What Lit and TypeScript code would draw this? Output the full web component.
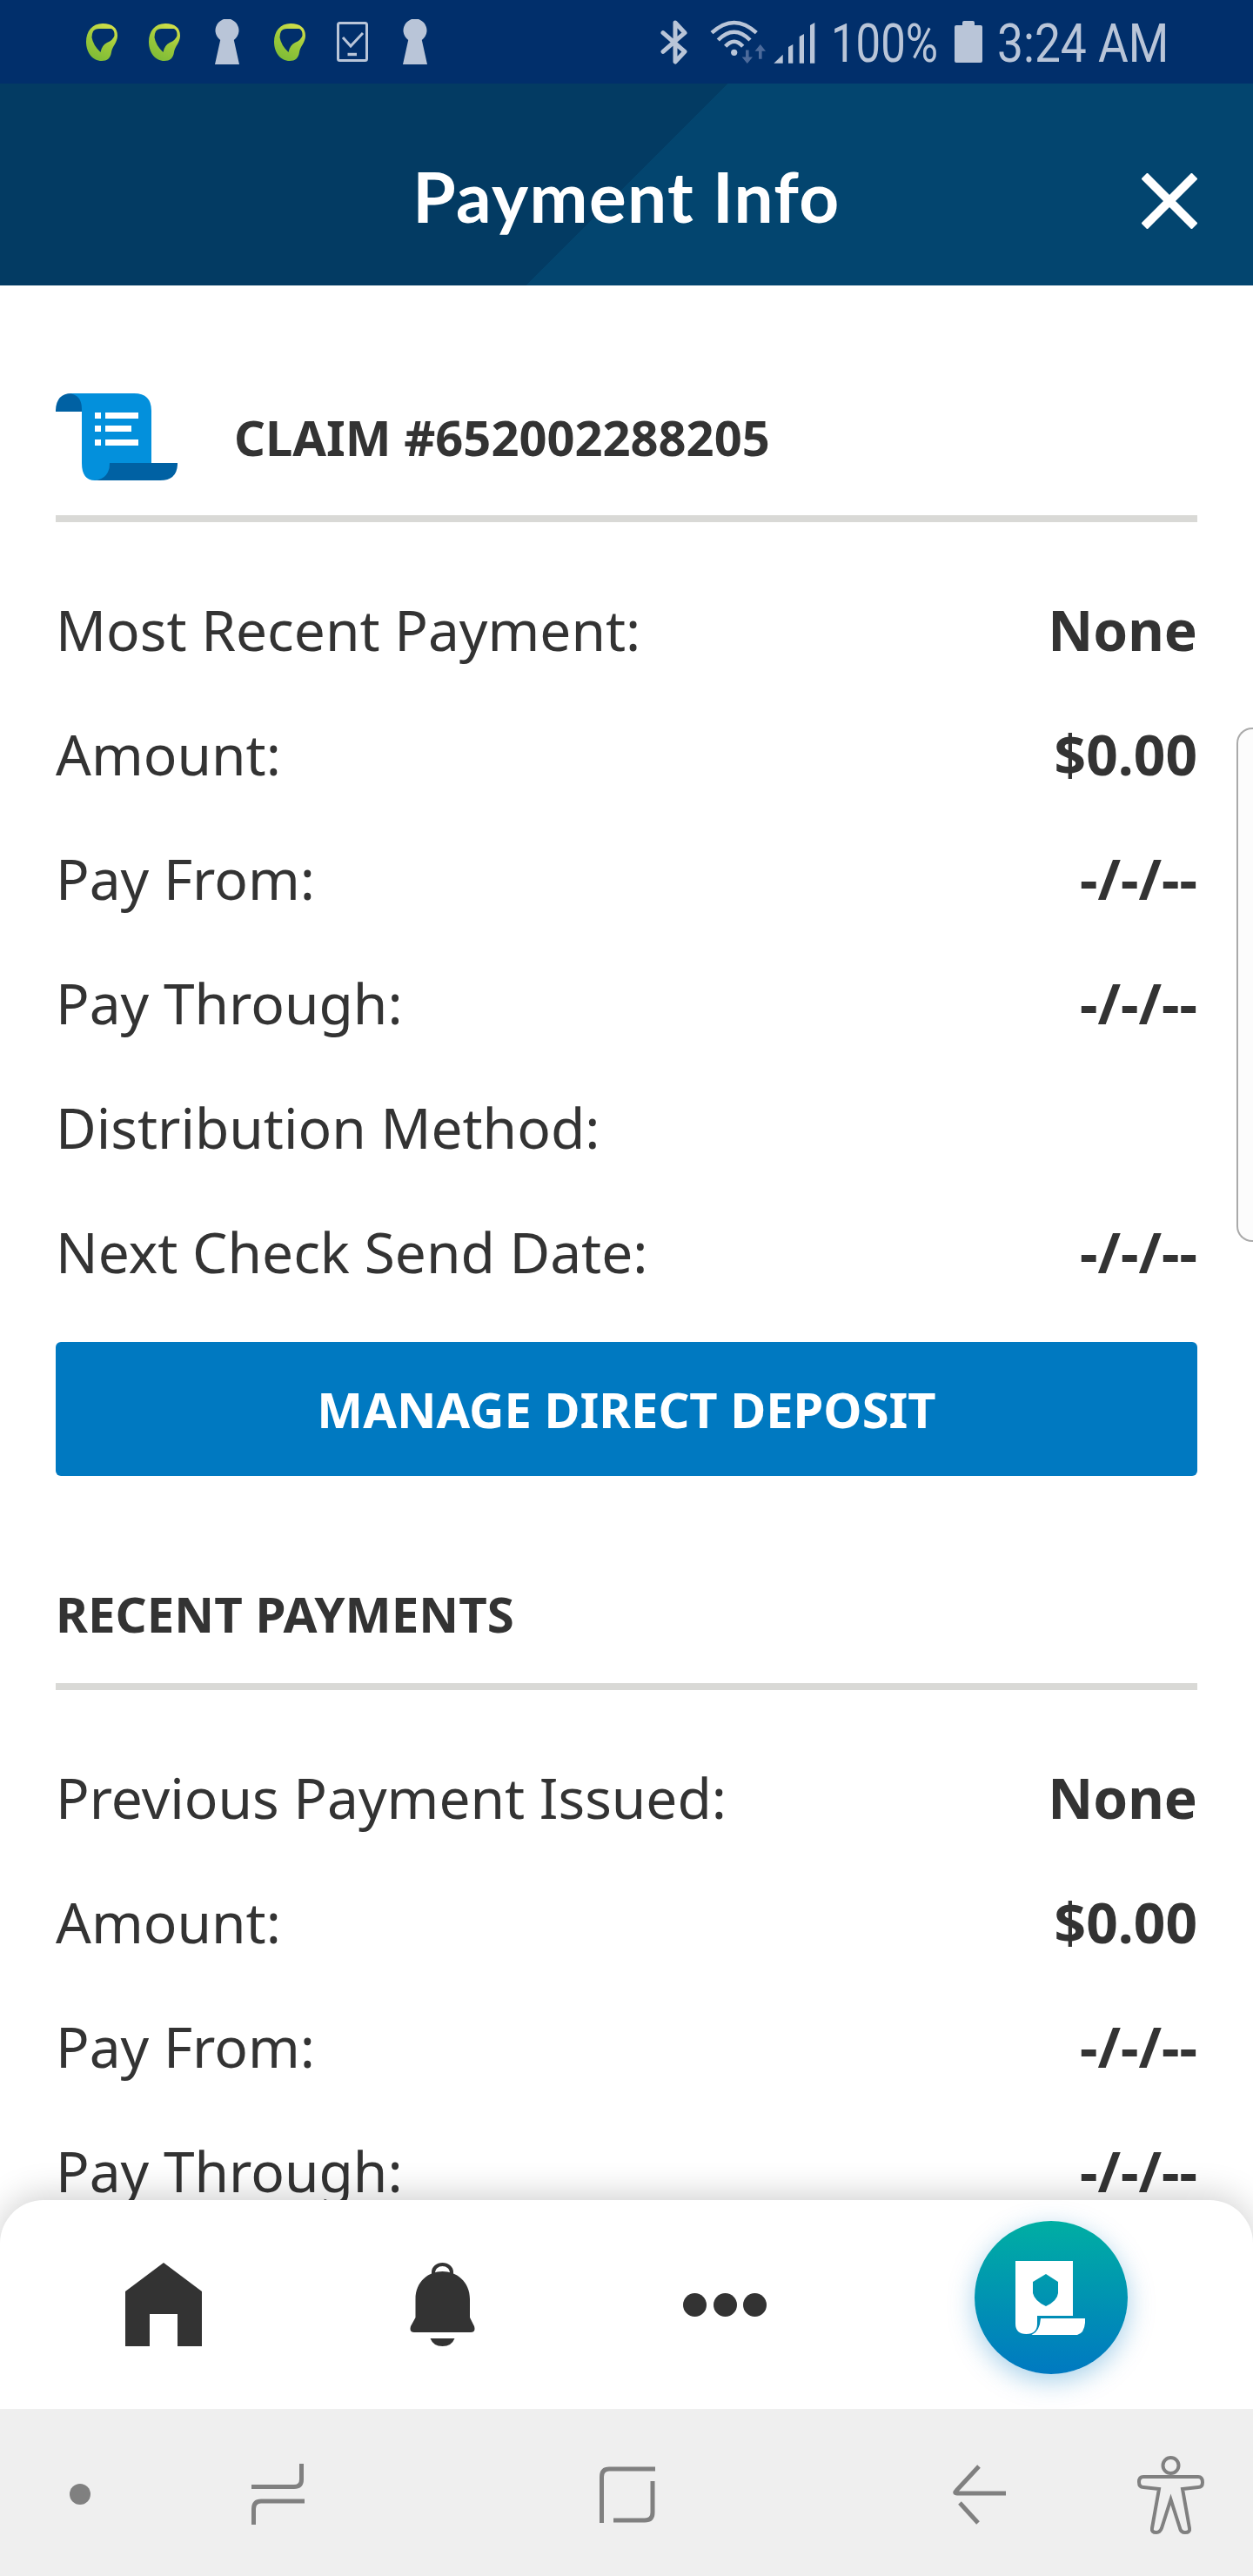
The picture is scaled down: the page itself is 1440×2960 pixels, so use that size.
import { LitElement, html, css } from "lit";
import { customElement } from "lit/decorators.js";

const leaf = html`<svg class="ic" width="36" height="43" viewBox="0 0 36 43">
  <defs><linearGradient id="lf" x1="0.7" y1="0" x2="0.3" y2="1"><stop offset="0" stop-color="#d3e04a" /><stop offset="0.5" stop-color="#9cc93a" /><stop offset="1" stop-color="#7dbb36" /></linearGradient></defs>
  <path fill="url(#lf)" fill-rule="evenodd" d="M19 0C30 0 36 5 36 14C36 22 30 26 29 33C28 40 24 43 18 43C7 43 0 33 0 21C0 9 7 0 19 0ZM8 9Q10 6 15 6L29 6Q33 8 32.5 14Q31 19 24 22Q18 25 16.5 33Q8 25 6.5 16Q6.5 12 8 9Z" />
</svg>`;

const keyhole = html`<svg class="ic" width="36" height="52" viewBox="0 0 36 52"><path fill="#b9c5d8" d="M10.2 24A13.5 13.5 0 1 1 25.8 24L32 52H4Z" /></svg>`;

const phone = html`<svg class="ic" width="36" height="46" viewBox="0 0 36 46" fill="none" stroke="#b9c5d8">
  <rect x="1.5" y="1.5" width="33" height="43" rx="2" stroke-width="3" />
  <path d="M7 18L16 28L30 13" stroke-width="3" /><path d="M12.5 37.5H23" stroke-width="3.4" />
</svg>`;

const bluetooth = html`<svg width="31" height="54" viewBox="0 0 31 54" fill="none" stroke="#b9c5d8" stroke-width="5" stroke-linejoin="round" stroke-linecap="round">
  <path d="M3 16.7L28 38.3L17 50V5L28 16.7L3 38.3" />
</svg>`;

const wifi = html`<svg width="68" height="54" viewBox="0 0 68 54" fill="none">
  <g stroke="#b9c5d8" stroke-width="4.5"><path d="M4 16.7Q29.7 -6.7 55.3 16.7" /><path d="M11.3 25Q29.7 6.4 48 25" /><path d="M19.7 32.3Q29.7 21 39.7 32.3" /></g>
  <circle cx="29.7" cy="39.3" r="3.6" fill="#b9c5d8" />
  <path fill="#4c6a9a" d="M43 36.5h3.6v8h4.4L44.8 52L38.6 44.5h4.4ZM58 46.7v-9h-4.4L59.8 30L66 37.7h-4.4v9Z" />
</svg>`;

const signal = html`<svg width="50" height="54" viewBox="0 0 50 54"><path fill="#b9c5d8" d="M1.3 51.7L11.7 41.7V51.7ZM18 51.7V33L23.3 30V51.7ZM30.7 51.7V21L36 18V51.7ZM43 51.7V8L48.3 5V51.7Z" /></svg>`;

const battery = html`<svg width="32" height="48" viewBox="0 0 32 48"><path fill="#b9c5d8" d="M9 2Q9 0 11 0H21Q23 0 23 2V5H30Q32 5 32 7V46Q32 48 30 48H2Q0 48 0 46V7Q0 5 2 5H9Z" /></svg>`;

const close = html`<svg width="64" height="64" viewBox="0 0 64 64" fill="none" stroke="#fff" stroke-width="10"><path d="M3 3L61 61M61 3L3 61" /></svg>`;

const scroll = html`<svg width="140" height="100" viewBox="0 0 140 100">
  <path fill="#0061a3" d="M0 21V19Q1 0 18 0Q31 1 31 21Z" />
  <path fill="#0390dc" d="M16 0H90Q110 0 110 20V84H62Q62 100 45 100Q30 100 30 80V18Q30 2 16 0Z" />
  <path fill="#0061a3" d="M62 80H140V82Q139 100 120 100H45Q62 98 62 80Z" />
  <path fill="#fff" d="M45 22h7v7h-7ZM57 22h38v7H57ZM45 37h7v7h-7ZM57 37h30v7H57ZM45 53h7v7h-7ZM57 53h38v7H57Z" />
</svg>`;

const home = html`<svg width="88" height="96" viewBox="0 0 88 96"><path fill="#333" d="M44 0L88 33V96H60V59H28V96H0V33Z" /></svg>`;

const bell = html`<svg width="75" height="96" viewBox="0 0 75 96">
  <path fill="#333" d="M37.5 10C53 10 69 21 69 42V63L74 73Q76 80 70 80H5Q-1 80 1 73L6.5 63V42C6.5 21 22 10 37.5 10Z" />
  <path fill="none" stroke="#333" stroke-width="4" d="M27 15V11A10.5 9 0 0 1 48 11V15" />
  <path fill="#333" d="M23.5 87H51.5Q48 96 37.5 96Q27 96 23.5 87Z" />
</svg>`;

const policy = html`<svg width="80" height="85" viewBox="0 0 80 85">
  <path fill="#fff" fill-rule="evenodd" d="M0 0H66V63H25V72Q25 84 12.5 84Q0 84 0 72ZM35 15L20 24V37Q22 46 35 52Q48 46 49 37V24Z" />
  <path fill="#fff" d="M29 66H80V71Q79 83 71 85H18.5Q28 81 29 66Z" />
</svg>`;

const recents = html`<svg width="61" height="70" viewBox="0 0 61 70" fill="none" stroke="#808080" stroke-width="5"><path d="M0 26.5H49Q57.5 26.5 57.5 18V0" /><path d="M61 43H11Q2.5 43 2.5 52V70" /></svg>`;

const square = html`<svg width="64" height="65" viewBox="0 0 64 65" fill="none" stroke="#808080" stroke-width="5"><path d="M2.5 65V12Q2.5 3 11 3H64" /><path d="M16 62H52Q61 62 61 53V17" /></svg>`;

const back = html`<svg width="62" height="70" viewBox="0 0 62 70" fill="none" stroke="#808080" stroke-width="5"><path d="M31 3L5 31Q2 34 6 34H62" /><path d="M9 45L30 68" /></svg>`;

const access = html`<svg width="78" height="92" viewBox="0 0 78 92" fill="none" stroke="#808080" stroke-width="4">
  <circle cx="38.5" cy="13" r="9" />
  <path d="M7 26H70Q75 26 75 32.5Q75 38 70 38L52 40L60 85Q61 90 55 90Q50 90 49 85L38.5 52L28 85Q26 90 22 90Q16 90 17 85L25 40L7 38Q2 38 2 32Q2 26 7 26Z" />
</svg>`;

const claimRows = [
  ["Most Recent Payment:", "None"],
  ["Amount:", "$0.00"],
  ["Pay From:", "-/-/--"],
  ["Pay Through:", "-/-/--"],
  ["Distribution Method:", ""],
  ["Next Check Send Date:", "-/-/--"],
];

const recentRows = [
  ["Previous Payment Issued:", "None"],
  ["Amount:", "$0.00"],
  ["Pay From:", "-/-/--"],
  ["Pay Through:", "-/-/--"],
];

@customElement("app-root")
export class AppRoot extends LitElement {
  static styles = css`
    :host {
      display: flex;
      flex-direction: column;
      position: relative;
      height: 2960px;
      overflow: hidden;
      background: #fff;
      font-family: "Noto Sans", sans-serif;
      color: #333;
    }
    .status {
      height: 96px;
      flex: none;
      background: #012f6b;
      display: flex;
      align-items: center;
      justify-content: space-between;
      padding: 0 99px;
      color: #b9c5d8;
      font-family: Roboto, sans-serif;
      font-weight: 400;
    }
    .status-left { display: flex; gap: 36px; align-items: center; }
    .status-right { display: flex; align-items: center; gap: 17px; }
    .radio { display: flex; align-items: center; gap: 6px; }
    .bt { margin-right: 18px; display: flex; }
    .stext {
      display: block;
      margin-top: 4px;
      font-size: 62px;
      line-height: 62px;
      white-space: nowrap;
      transform-origin: left center;
    }
    .pct { width: 125px; transform: scaleX(0.82); }
    .time { width: 195px; transform: scaleX(0.86); }

    .header {
      height: 232px;
      flex: none;
      box-sizing: border-box;
      padding: 26px 64px 0;
      background: linear-gradient(135deg, #033b63 50%, #03456f 50%);
      display: grid;
      grid-template-columns: 1fr auto 1fr;
      align-items: center;
    }
    .title {
      grid-column: 2;
      font-family: Lato, sans-serif;
      font-weight: 700;
      font-size: 80px;
      line-height: 90px;
      letter-spacing: 1.4px;
      color: #fff;
    }
    .close { justify-self: end; display: flex; margin-top: 12px; }

    .content {
      flex: 1;
      min-height: 0;
      overflow: hidden;
      padding: 124px 64px 0;
    }
    .head {
      display: flex;
      align-items: center;
      border-bottom: 8px solid #d9d9d6;
    }
    .claim { padding-bottom: 40px; gap: 65px; }
    .claim svg { display: block; }
    .head-text {
      font-weight: 700;
      font-size: 56px;
      line-height: 78px;
      white-space: nowrap;
    }
    .recent { margin-top: 120px; padding-bottom: 40px; }
    .recent .head-text { font-size: 56.4px; }
    .rows { padding-top: 52px; }
    .row {
      height: 143px;
      display: flex;
      align-items: center;
      justify-content: space-between;
      font-size: 64px;
      white-space: nowrap;
    }
    .value { font-weight: 700; }
    .btn {
      display: block;
      width: 100%;
      height: 154px;
      margin-top: 32px;
      border: 0;
      border-radius: 6px;
      background: #0079c1;
      color: #fff;
      font-family: inherit;
      font-weight: 700;
      font-size: 56px;
      padding: 0;
    }

    .nav {
      position: relative;
      flex: none;
      height: 240px;
      box-sizing: border-box;
      padding: 0 144px;
      display: flex;
      align-items: center;
      justify-content: space-between;
      background: #fff;
      border-radius: 50px 50px 0 0;
      box-shadow: 0 -4px 40px rgba(0, 0, 0, 0.2);
    }
    .nav svg { display: block; }
    .dots { display: flex; gap: 7.5px; }
    .dots i { width: 27px; height: 27px; border-radius: 50%; background: #333; }
    .fab {
      width: 176px;
      height: 176px;
      margin-bottom: 16px;
      border-radius: 50%;
      background: linear-gradient(180deg, #00aea3, #0079c1);
      box-shadow: 0 8px 30px rgba(0, 121, 193, 0.35);
      display: flex;
      align-items: center;
      justify-content: center;
    }
    .fab svg { margin-left: -2px; }

    .sysbar {
      position: relative;
      flex: none;
      height: 192px;
      box-sizing: border-box;
      padding: 4px 0 0 80px;
      background: #efefef;
      display: flex;
      align-items: center;
    }
    .sysdot { width: 24px; height: 24px; border-radius: 50%; background: #808080; }
    .sysbar svg { display: block; }
    .s-recents { margin-left: 185px; }
    .s-square { margin-left: 339px; }
    .s-back { margin-left: 341px; }
    .s-access { margin-left: 151px; }

    .handle {
      position: absolute;
      top: 836px;
      right: 0;
      width: 19px;
      height: 591px;
      box-sizing: border-box;
      background: #fcfcfc;
      border: 2px solid #aaa;
      border-right: 0;
      border-radius: 18px 0 0 18px;
    }
  `;

  renderRows(rows: string[][]) {
    return html`<div class="rows">
      ${rows.map(
        ([label, value]) => html`<div class="row">
          <span>${label}</span><span class="value">${value}</span>
        </div>`
      )}
    </div>`;
  }

  render() {
    return html`
      <div class="status">
        <div class="status-left">${leaf}${leaf}${keyhole}${leaf}${phone}${keyhole}</div>
        <div class="status-right">
          <div class="radio"><span class="bt">${bluetooth}</span>${wifi}${signal}</div>
          <span class="stext pct">100%</span>
          ${battery}
          <span class="stext time">3:24 AM</span>
        </div>
      </div>
      <div class="header">
        <div class="title">Payment Info</div>
        <div class="close">${close}</div>
      </div>
      <div class="content">
        <div class="head claim">${scroll}<span class="head-text">CLAIM #652002288205</span></div>
        ${this.renderRows(claimRows)}
        <button class="btn">MANAGE DIRECT DEPOSIT</button>
        <div class="head recent"><span class="head-text">RECENT PAYMENTS</span></div>
        ${this.renderRows(recentRows)}
      </div>
      <div class="nav">
        ${home}${bell}
        <div class="dots"><i></i><i></i><i></i></div>
        <div class="fab">${policy}</div>
      </div>
      <div class="sysbar">
        <div class="sysdot"></div>
        <div class="s-recents">${recents}</div>
        <div class="s-square">${square}</div>
        <div class="s-back">${back}</div>
        <div class="s-access">${access}</div>
      </div>
      <div class="handle"></div>
    `;
  }
}
